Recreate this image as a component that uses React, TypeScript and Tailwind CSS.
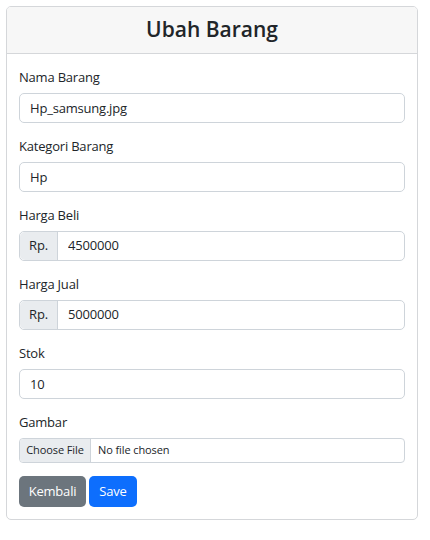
import React from 'react';

const font = { fontFamily: '"Open Sans", "Noto Sans", sans-serif' };

const Field: React.FC<{ label: string; children: React.ReactNode }> = ({ label, children }) => (
  <div className="mb-[13px] flex flex-col">
    <label className="mb-[5px] h-[21px] text-[13px] leading-[21px] tracking-[-0.2px] text-[#212529]">{label}</label>
    {children}
  </div>
);

const inputCls =
  'h-[30px] w-full rounded-[5px] border border-[#ced4da] bg-white px-[10px] text-[13px] tracking-[-0.2px] text-[#212529] outline-none';

const addonCls =
  'flex w-[38px] items-center justify-center rounded-l-[5px] border-r border-[#ced4da] bg-[#e9ecef] text-[13px] tracking-[-0.2px] text-[#212529]';

const App: React.FC = () => {
  return (
    <div className="min-h-[540px] w-[430px] bg-white pl-[6px] pr-[12px] pt-[6px]" style={font}>
      <div className="overflow-hidden rounded-[5px] border border-[#d5d7da]">
        <div className="flex h-[47px] items-center justify-center border-b border-[#d5d7da] bg-[#f7f7f7]">
          <h3 className="text-[21px] font-semibold text-[#212529]">Ubah Barang</h3>
        </div>
        <div className="px-3 pb-3 pt-[13px]">
          <Field label="Nama Barang">
            <input className={inputCls} defaultValue="Hp_samsung.jpg" />
          </Field>
          <Field label="Kategori Barang">
            <input className={inputCls} defaultValue="Hp" />
          </Field>
          <Field label="Harga Beli">
            <div className="flex h-[30px] rounded-[5px] border border-[#ced4da]">
              <span className={addonCls}>Rp.</span>
              <input className="min-w-0 flex-1 rounded-r-[5px] px-[10px] text-[13px] tracking-[-0.2px] text-[#212529] outline-none" defaultValue="4500000" />
            </div>
          </Field>
          <Field label="Harga Jual">
            <div className="flex h-[30px] rounded-[5px] border border-[#ced4da]">
              <span className={addonCls}>Rp.</span>
              <input className="min-w-0 flex-1 rounded-r-[5px] px-[10px] text-[13px] tracking-[-0.2px] text-[#212529] outline-none" defaultValue="5000000" />
            </div>
          </Field>
          <Field label="Stok">
            <input className={inputCls} defaultValue="10" />
          </Field>
          <Field label="Gambar">
            <div className="flex h-[25px] rounded-[4px] border border-[#ced4da] text-[11px] tracking-[-0.1px] text-[#212529]">
              <span className="flex w-[71px] items-center justify-center rounded-l-[4px] border-r border-[#ced4da] bg-[#e9ecef]">
                Choose File
              </span>
              <span className="flex items-center pl-[7px]">No file chosen</span>
            </div>
          </Field>
          <div className="flex gap-[3px]">
            <button className="h-[31px] w-[67px] rounded-[5px] bg-[#6c757d] text-[13px] tracking-[-0.2px] text-white">Kembali</button>
            <button className="h-[31px] w-[48px] rounded-[5px] bg-[#0d6efd] text-[13px] tracking-[-0.2px] text-white">Save</button>
          </div>
        </div>
      </div>
    </div>
  );
};

export default App;
